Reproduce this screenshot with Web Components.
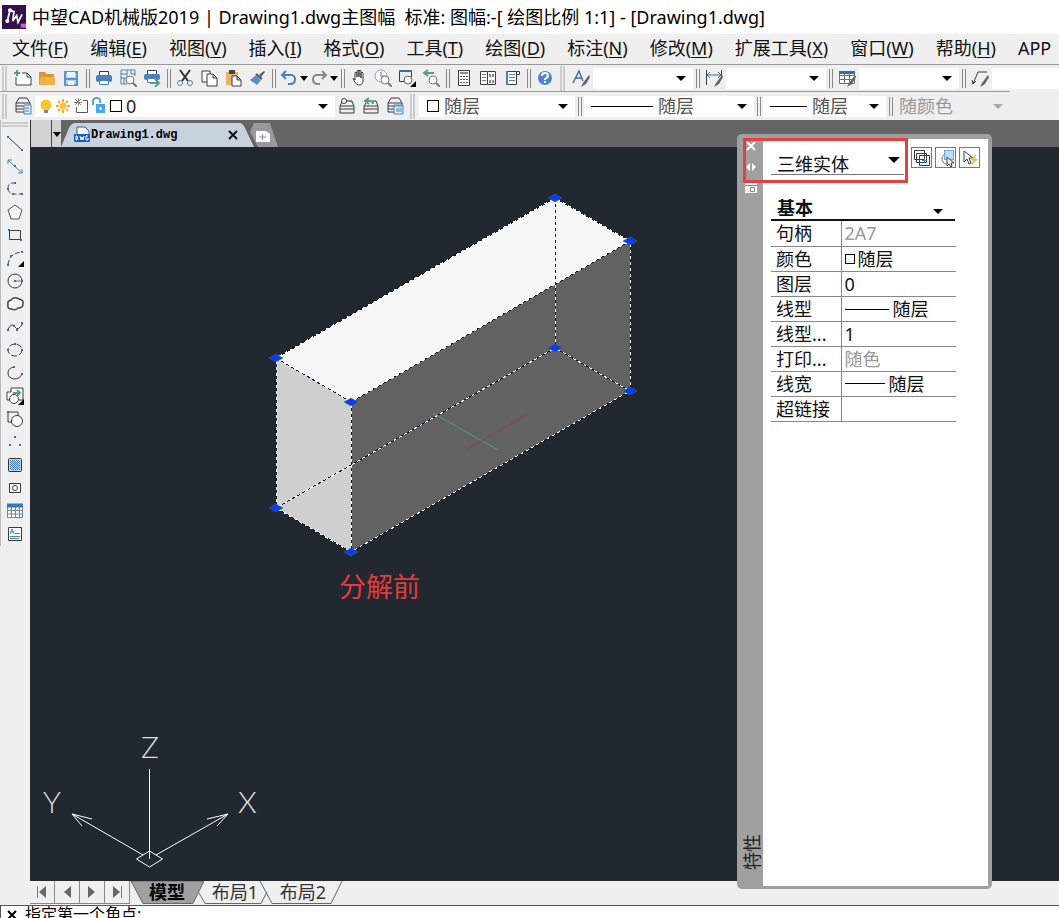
<!DOCTYPE html>
<html lang="zh-CN">
<head>
<meta charset="utf-8">
<title>中望CAD机械版2019</title>
<style>
html,body{margin:0;height:100%;overflow:hidden}
body{font:18px/24px "Noto Sans","Noto Sans CJK SC",sans-serif;color:#111;background:#efefef}
</style>
</head>
<body>
<cad-app>
  <cad-titlebar slot="title">中望CAD机械版2019 | Drawing1.dwg主图幅  标准: 图幅:-[ 绘图比例 1:1] - [Drawing1.dwg]</cad-titlebar>
  <cad-menubar slot="menu"></cad-menubar>
  <cad-toolbar slot="bars">
    <tool-button icon="new" label="新建"></tool-button><tool-button icon="open" label="打开"></tool-button><tool-button icon="save" label="保存"></tool-button>
    <bar-sep></bar-sep>
    <tool-button icon="print" label="打印"></tool-button><tool-button icon="preview" label="打印预览"></tool-button><tool-button icon="publish" label="发布"></tool-button>
    <bar-sep></bar-sep>
    <tool-button icon="cut" label="剪切"></tool-button><tool-button icon="copy" label="复制"></tool-button><tool-button icon="paste" label="粘贴"></tool-button><tool-button icon="brush" label="特性匹配"></tool-button>
    <bar-sep></bar-sep>
    <tool-button class="tight" icon="undo" label="放弃"></tool-button><tool-button class="arrow" icon="down" label="放弃列表"></tool-button><tool-button class="tight" icon="redo" label="重做"></tool-button><tool-button class="arrow" icon="down" label="重做列表"></tool-button>
    <bar-sep></bar-sep>
    <tool-button icon="hand" label="平移"></tool-button><tool-button icon="zoomrt" label="实时缩放"></tool-button><tool-button icon="zoomwin" label="窗口缩放"></tool-button><tool-button icon="zoomprev" label="上一个"></tool-button>
    <bar-sep></bar-sep>
    <tool-button icon="calc" label="计算器"></tool-button><tool-button icon="center" label="设计中心"></tool-button><tool-button icon="sheet" label="工具选项板"></tool-button>
    <bar-sep></bar-sep>
    <tool-button icon="help" label="帮助"></tool-button>
    <bar-sep class="light"></bar-sep>
    <tool-button icon="tstyle" label="文字样式"></tool-button><combo-box label="文字样式" style="--w:100px"></combo-box>
    <bar-sep></bar-sep>
    <tool-button icon="dstyle" label="标注样式"></tool-button><combo-box label="标注样式" style="--w:100px"></combo-box>
    <bar-sep></bar-sep>
    <tool-button icon="tabstyle" label="表格样式"></tool-button><combo-box label="表格样式" style="--w:100px"></combo-box>
    <bar-sep></bar-sep>
    <tool-button icon="mstyle" label="多重引线样式"></tool-button><combo-box label="多重引线样式" style="--w:100px"></combo-box>
  </cad-toolbar>
  <cad-toolbar slot="bars" class="short">
    <tool-button icon="layers" label="图层特性管理器"></tool-button>
    <combo-box label="图层" value="0" style="--w:300px;--fg:#222"><cad-icon name="layerstate" slot="lead" style="--iw:87px;--ih:18px"></cad-icon></combo-box>
    <tool-button icon="layercur" label="置为当前"></tool-button><tool-button icon="layerprev" label="上一个图层"></tool-button><tool-button icon="layerset" label="图层状态"></tool-button>
    <bar-sep class="light"></bar-sep>
    <combo-box label="颜色" value="随层" style="--w:156px"><cad-icon name="swatch" slot="lead" style="--iw:21px"></cad-icon></combo-box>
    <bar-sep></bar-sep>
    <combo-box label="线型" value="随层" style="--w:170px"><cad-icon name="longline" slot="lead" style="--iw:70px"></cad-icon></combo-box>
    <bar-sep></bar-sep>
    <combo-box label="线宽" value="随层" style="--w:123px"><cad-icon name="shortline" slot="lead" style="--iw:45px"></cad-icon></combo-box>
    <bar-sep></bar-sep>
    <combo-box label="打印样式" value="随颜色" disabled style="--w:115px"></combo-box>
  </cad-toolbar>
  <draw-toolbox slot="tools"></draw-toolbox>
  <doc-tabs slot="work"></doc-tabs>
  <drawing-view slot="work"></drawing-view>
  <layout-tabs slot="work"></layout-tabs>
  <property-panel slot="float"></property-panel>
  <command-line slot="command">指定第一个角点:</command-line>
</cad-app>
<script>
const K='stroke="#3c3c3c" fill="none"', B='stroke="#4a82b8" fill="none"', W='stroke="#3c3c3c" fill="#fff"';
const stack='<path d="M5 1h8l3 5H2zM2 6v3h14V6M2 9v3h14V9M2 12v3h14v-3" '+K+'/>';
const lens='<circle cx="11" cy="11" r="4" stroke="#777" fill="#fff"/><path d="M14 14l4 4" stroke="#777" stroke-width="2"/>';
const pen='<path d="M17 6l1 2-4 7-5 3 2-4z" fill="#666"/>';
const corner='<path d="M18 12v6h-6z" fill="#000"/>';
const dot=(x,y)=>`<rect x="${x-1}" y="${y-1}" width="2" height="2" fill="#3a6cab"/>`;
const ICONS={
new:'<path d="M8 4h5l4 4v8H2V8M13 4v4h4" '+W+'/><path d="M0 4h6M3 1v6" stroke="#54a082" stroke-width="2"/>',
open:'<path d="M1 3h6l2 2h7v11H1z" fill="#d8962c"/><path d="M3 8h14v8H1z" fill="#efb24a"/>',
save:'<path d="M3 3h12v13H3z" stroke="#5a94cf" fill="#b9d7f2" stroke-width="2"/><path d="M5 3h8v5H5z" fill="#e9f3fc"/><path d="M3 10h12" stroke="#5a94cf" stroke-width="2"/><path d="M6 12h6v4H6z" fill="#fff"/>',
print:'<path d="M4.500 6V2.500h9V6" '+W+'/><rect x="1" y="6" width="16" height="7" rx="2" fill="#4b80bf"/><path d="M4.500 11.500h9v4h-9z" stroke="#4b80bf" fill="#fff"/>',
preview:'<path d="M2 1h14v6M2 1v14h6M2 5h6v4H2M8 1v4M5 9v6M12 1v4h4" '+B+'/>'+lens,
publish:'<path d="M4.500 5V1.500h9V5" '+W+'/><rect x="1" y="5" width="16" height="6" rx="2" fill="#4b80bf"/><path d="M4.500 9.500h9v4h-9z" stroke="#4b80bf" fill="#fff"/><path d="M7 14h8M12 10l4 4-4 4" stroke="#54a082" stroke-width="2" fill="none"/>',
cut:'<path d="M4 1l8 11M14 1L6 12" stroke="#333" stroke-width="2"/><circle cx="4" cy="14" r="2.5" '+B+' /><circle cx="14" cy="14" r="2.5" '+B+'/>',
copy:'<path d="M2 2h8v11H2z" '+W+'/><path d="M7 5h6l4 4v8H7zM13 5v4h4" '+W+'/>',
paste:'<path d="M2 3h12v13H2z" fill="#e8b46c"/><path d="M5 1h6v4H5z" fill="#444"/><path d="M8 7h5l4 4v6H8zM13 7v4h4" '+W+'/>',
brush:'<path d="M16 2l1 1-4 5-2-2z" fill="#555"/><path d="M8 6l5 5-4 5-7-5z" fill="#5b8cc4"/><path d="M8 5l6 5" stroke="#555" stroke-width="2"/>',
undo:'<path d="M6 2L2 6l4 4M2 6h9a4 4 0 014 4c0 3-2 5-5 5H8" stroke="#4b80bf" stroke-width="2" fill="none"/>',
redo:'<path d="M12 2l4 4-4 4M16 6H7a4 4 0 00-4 4c0 3 2 5 5 5h2" stroke="#888" stroke-width="2" fill="none"/>',
down:'<path d="M5 7h8l-4 5z" fill="#000"/>',
hand:'<path d="M5 11V4q1-2 2 0v4-6q1-2 2 0v6-6q1-2 2 0v7-5q1-2 2 0v7q0 5-4 5H8q-2 0-5-6 0-2 2 1" '+W+'/>',
zoomrt:'<circle cx="7" cy="7" r="6" stroke="#7ba4cd" fill="#fff"/><path d="M7 3v4h4" '+B+'/>'+lens,
zoomwin:'<path d="M1.500 12.500v-10h12v6M1.500 12.500H6" '+K+'/><path d="M1 2h13" stroke="#3a6cab" stroke-width="2"/><circle cx="10" cy="11" r="4" stroke="#666" fill="#fff"/>'+corner,
zoomprev:'<path d="M6 1L2 4l4 3M2 4h10" stroke="#54a082" stroke-width="2" fill="none"/>'+lens,
calc:'<path d="M3.500 1.500h11v15h-11z" '+W+'/><path d="M5 4h8" stroke="#888" stroke-width="2"/><path d="M5 7.500h8M5 10.500h8M5 13.500h8" stroke="#555" stroke-dasharray="2 1"/>',
center:'<path d="M1.500 2.500h7v13h-7zM8.500 2.500h8v13h-8" '+W+'/><path d="M3 5.500h4M3 8.500h4M3 11.500h4" stroke="#4b80bf"/><path d="M10 5h2v3h-2zM13 5h2v3h-2zM10 11h2v3h-2zM13 11h2v3h-2z" fill="#888"/>',
sheet:'<path d="M3.500 2.500h10v13h-10zM13.500 2.500h3v3h-3" '+W+'/><path d="M4 2v14" stroke="#4b80bf" stroke-width="2"/><path d="M6 5.500h6M6 8.500h6M6 11.500h6" '+B+'/>',
help:'<circle cx="9" cy="9" r="7" fill="#4b86c9"/><path d="M6 7q0-3 3-3t3 3q0 1-3 3v1M9 12v2" stroke="#fff" stroke-width="2" fill="none"/>',
tstyle:'<path d="M1 14L7 2l4 10M4 9h6" stroke="#3a6cab" fill="none" stroke-width="1.5"/>'+pen,
dstyle:'<path d="M1.500 1v15M16.500 1v6" '+K+'/><path d="M2 6h14M5 3L2 6l3 3M13 3l3 3-3 3" stroke="#3a6cab" fill="none"/>'+pen,
tabstyle:'<path d="M1.500 2.500h15v12h-15zM1 6.500h15M1 10.500h15M6.500 2v13M11.500 2v13" stroke="#5d7389" fill="#fff"/><path d="M1 3.500h16" stroke="#3a6cab" stroke-width="3"/>'+pen,
mstyle:'<path d="M1 11l1 4 3-3M2 15L7 3h9" '+K+'/>'+pen,
layers:stack+'<path d="M10 8h7v9h-7z" stroke="#4a82b8" fill="#dcecfa"/><path d="M11 11h4M11 14h4" '+B+'/>',
layerset:stack+'<path d="M8 8h9v9H8z" stroke="#4a82b8" fill="#dcecfa"/><path d="M8 9h9M10 12h6M10 14h6" '+B+'/>',
layercur:'<path d="M8 4h6l2 5H2l2-4M2 9v3h14V9M2 12v4h14v-4" '+K+'/><circle cx="6" cy="4" r="2.5" '+W+'/><path d="M9 4h4l3 5" '+B+'/>',
layerprev:'<path d="M10 4h4l2 5H2l2-3M2 9v3h14V9M2 12v4h14v-4" '+K+'/><path d="M7 1L3 4l4 3M3 4h5q3 0 3 3" stroke="#54a082" stroke-width="2" fill="none"/>',
layerstate:['0 0 87 18','<circle cx="11" cy="8" r="5.5" fill="#f9c62f"/><path d="M9 13h4v3H9z" fill="#888"/><circle cx="28" cy="9" r="3.500" fill="#f8c33e"/><path d="M28 2v3M28 13v3M21 9h3M32 9h3M23 4l2 2M31 12l2 2M33 4l-2 2M23 14l2-2" stroke="#edae38" stroke-width="2"/><path d="M48 3.500h4.500v12h-11V10" stroke="#555" fill="#fff"/><path d="M43.500 1v8M39 5.500h8M40 2l6 6M46 2l-6 6" stroke="#888"/><path d="M58 8V4q0-3 4-3t3 5" stroke="#4ba6e2" stroke-width="2" fill="none"/><rect x="61" y="7" width="9" height="9" fill="#49a8ea"/><path d="M65.500 10v3" stroke="#fff" stroke-width="2"/><rect x="75.5" y="3.5" width="11" height="11" fill="#fff" stroke="#000"/>'],
swatch:['0 0 21 18','<rect x="8.5" y="3.5" width="11" height="11" fill="#fff" stroke="#000"/>'],
longline:['0 0 70 18','<path d="M7 9.500h62" stroke="#000"/>'],
shortline:['0 0 45 18','<path d="M7 9.500h37" stroke="#000"/>'],
smallswatch:['0 0 12 18','<rect x=".5" y="4.500" width="9" height="9" fill="#fff" stroke="#000"/>'],
line44:['0 0 44 18','<path d="M0 9.500h44" stroke="#000"/>'],
line40:['0 0 40 18','<path d="M0 8.500h40" stroke="#000"/>'],
tline:'<path d="M2 3l14 13" '+K+'/>'+dot(2,3)+dot(16,16),
txline:'<path d="M2 3l14 13M2 7V3h4M12 16h4v-4" '+B+'/>'+dot(9,9),
tpline:'<path d="M9 3H7q-5 0-5 5t5 6h10" stroke="#4c586b" fill="none" stroke-dasharray="4 2"/>'+dot(9,3)+dot(2,9)+dot(7,14)+dot(16,14),
tpoly:'<path d="M9 2l7 5-3 9H5L2 7z" stroke="#555" fill="#f4f4f4"/>',
trect:'<path d="M3.500 4.500h11v9h-11z" '+K+'/>'+dot(3,4)+dot(15,14),
tarc:'<path d="M2 16Q3 4 16 3" stroke="#3c3c3c" fill="none" stroke-dasharray="5 2"/>'+dot(2,16)+dot(5,7)+dot(16,3)+corner,
tcircle:'<circle cx="9" cy="9" r="7" '+K+'/><path d="M9 9h8" '+B+'/>'+dot(9,9)+dot(16,9),
tcloud:'<path d="M5 5q3-4 8-1 5 1 4 5 0 4-5 4-3 3-6 1-5 0-4-4-1-4 3-5z" stroke="#444" stroke-width="1.5" fill="#f4f4f4"/>',
tspline:'<path d="M2 11q4-7 7-2t8-4" '+K+'/>'+dot(2,12)+dot(8,8)+dot(11,12)+dot(16,5),
tellipse:'<ellipse cx="9" cy="9" rx="7" ry="6" stroke="#3c3c3c" fill="none" stroke-dasharray="6 2"/>'+dot(2,9)+dot(16,9)+dot(9,3),
tearc:'<path d="M8 3q-6 1-6 6t6 6q6 0 8-5" '+K+'/>'+dot(8,3)+dot(16,10),
tinsert:'<path d="M5 1h12v12h-4M5 1v4M5 5H1v8h4" '+W+'/><circle cx="8" cy="12" r="4.5" '+W+'/><path d="M7 6h7M11 3l3 3-3 3" stroke="#54a082" stroke-width="2" fill="none"/>'+corner,
tblock:'<path d="M2 12V2h10v5M2 12h4" '+K+'/><circle cx="11" cy="11" r="5.5" '+W+'/>'+dot(2,2),
tpoint:dot(9,4)+dot(4,12)+dot(14,12),
thatch:'<rect x="2.5" y="2.5" width="13" height="13" rx="1" fill="#b8d2ee" stroke="#333"/><path d="M4 4.500h10M4 6.500h10M4 8.500h10M4 10.500h10M4 12.500h10" stroke="#4a82b8" stroke-dasharray="1 1"/><path d="M5 5.500h9M5 7.500h9M5 9.500h9M5 11.500h9M5 13.500h9" stroke="#4a82b8" stroke-dasharray="1 1"/>',
tregion:'<path d="M3.5 4.5h11v9h-11z" '+W+'/><circle cx="9" cy="9" r="2.5" '+K+'/>',
ttable:'<path d="M1.5 2.5h15v13h-15zM1 8.500h15M1 12h15M5.500 2v14M9.500 2v14M13.500 2v14" stroke="#6d87a5" fill="#fff"/><path d="M1 3.500h16" stroke="#3a78b5" stroke-width="4"/>',
ttext:'<path d="M2.5 2.500h13v13h-13z" '+W+'/><path d="M4 9l2-5 2 5M5 7h3M9 8.500h5M4 11.500h10M4 13.500h9" '+B+'/>',
app:'<rect width="18" height="18" fill="#34104d"/><path d="M6 4L4 12M6 4l3 1-1 7 3-4 1 5 3-6" stroke="#fff" stroke-width="1.300" fill="none"/><circle cx="6" cy="4" r="1.500" fill="#fff"/><circle cx="4" cy="12" r="1.500" fill="#fff"/><rect x="14" y="14" width="4" height="3" fill="#d558d8"/>',
close:'<path d="M5 5l8 8M13 5l-8 8" stroke="currentColor" stroke-width="2"/>',
split:'<path d="M8 5v8L4 9zM10 5v8l4-4z" fill="#fff"/>',
options:'<path d="M3 4h12v10H3z" fill="#fff"/><path d="M3 6.500h12M8.500 8.500h4v4h-4z" stroke="#888" fill="none"/>',
psel:'<path d="M1.500 1.500h10v9h-10zM3.500 4.500h10v9h-10zM6.500 6.500h10v10h-10z" '+W+'/><path d="M9 11.500h5M11.500 9v5" '+B+'/>',
pobj:'<rect x="7.500" y="1.500" width="9" height="9" fill="#b9dcf8" stroke="#6ea8d8"/><path d="M7 6a5 5 0 106 8" '+B+'/><path d="M10 8v9l2-2 2 3 1-1-1-3h3z" '+W+'/>',
pquick:'<path d="M3 2v11l3-3 2 5 2-1-2-5h4z" '+W+'/><path d="M15 5l-6 6h3l-2 6 7-7h-3z" fill="#efbd68"/>',
dwg:'<path d="M4 1h8l4 4v8H4z" fill="#fff" stroke="#285a9e"/><rect x="1" y="8" width="16" height="8" rx="1" fill="#1d5db9"/><path d="M3 10v4h1q1-2 0-4zM7 10l1 4 1-3 1 3 1-4M15 10h-2v4h2v-2" stroke="#fff" fill="none"/>',
plus:'<path d="M2 4h10l4 3v8H2z" fill="#fff"/><path d="M5 10h7M8.500 7v6" stroke="#6ba0c2"/>',
first:'<path d="M4.500 3v12" stroke="#777"/><path d="M13 3v12L6 9z" fill="#666"/>',
prev:'<path d="M13 3v12L6 9z" fill="#666"/>',
next:'<path d="M5 3v12l7-6z" fill="#666"/>',
last:'<path d="M5 3v12l7-6z" fill="#666"/><path d="M13.500 3v12" stroke="#777"/>'
};
const icon=n=>{const i=ICONS[n],[v,s]=Array.isArray(i)?i:['0 0 18 18',i];return `<svg viewBox="${v}" aria-hidden="true">${s}</svg>`};
const define=(name,html)=>customElements.define(name,class extends HTMLElement{
  constructor(){super();this.attachShadow({mode:'open'})}
  connectedCallback(){this.shadowRoot.innerHTML=typeof html==='function'?html(this):html}
});
const RESET='*{box-sizing:border-box}button,input,select{font:inherit;color:inherit;background:none;border:0;border-radius:0;padding:0;margin:0;outline:0;appearance:none}';

define('cad-icon',h=>`<style>:host{display:block;flex:none;width:var(--iw,18px);height:var(--ih,18px)}svg{display:block;width:100%;height:100%}</style>${icon(h.getAttribute('name'))}`);

define('tool-button',h=>`<style>${RESET}:host{display:block;flex:none;width:24px;height:23px}:host(.tight){width:22px}:host(.arrow){width:8px}
button{display:flex;width:100%;height:100%;align-items:center;justify-content:center}</style>
<button aria-label="${h.getAttribute('label')}"><cad-icon name="${h.getAttribute('icon')}"></cad-icon></button>`);

define('bar-sep',`<style>:host{display:flex;flex:none;justify-content:flex-end;width:9px;height:19px;box-sizing:border-box;padding-right:2px}
:host(.light){width:12px;height:25px;padding-right:4px}i{width:4px;box-sizing:border-box;border:solid #8a8a8a;border-width:0 1px}:host(.light) i{border-color:#ccc;border-width:0 2px;width:5px}</style><i></i>`);

define('combo-box',h=>`<style>${RESET}:host{display:block;flex:none;width:var(--w)}
div{display:flex;align-items:center;height:21px;background:#fff;position:relative}
div.off{background:none;color:#999}
select{flex:1;min-width:0;height:21px;line-height:20px;padding-left:4px;color:var(--fg,#555);opacity:1}
.off select{color:#999}
svg{position:absolute;right:7px;top:8px;width:10px;height:5px;pointer-events:none;fill:#000}.off svg{fill:#aaa}</style>
<div class="${h.hasAttribute('disabled')?'off':''}"><slot name="lead"></slot><select aria-label="${h.getAttribute('label')}" ${h.hasAttribute('disabled')?'disabled':''}><option>${h.getAttribute('value')||''}</option></select><svg viewBox="0 0 10 5"><path d="M0 0h10L5 5z"/></svg></div>`);

define('cad-titlebar',`<style>:host{display:flex;align-items:center;gap:6px;height:34px;padding:0 2px;background:#fff;white-space:pre;color:#000;overflow:hidden}h1{font:inherit;margin:0}</style>
<cad-icon name="app" style="--iw:24px;--ih:24px"></cad-icon><h1><slot></slot></h1>`);

define('cad-menubar',()=>`<style>${RESET}:host{display:block;border-bottom:1px solid #999}
nav{display:flex;gap:22px;height:30px;padding:0 0 2px 12px;overflow:hidden}button{flex:none;white-space:nowrap}u{font-style:normal;text-underline-offset:2px;text-decoration-thickness:1px}</style>
<nav>${['文件F','编辑E','视图V','插入I','格式O','工具T','绘图D','标注N','修改M','扩展工具X','窗口W','帮助H'].map(t=>`<button>${t.slice(0,-1)}(<u>${t.slice(-1)}</u>)</button>`).join('')}<button>APP</button></nav>`);

define('cad-toolbar',`<style>:host{display:block;overflow:hidden}:host(.short){width:fit-content;border-top:1px solid #999}
div{display:flex;align-items:center;height:26px}:host(.short) div{height:28px}
i{flex:none;width:5px;height:25px;margin:0 4px 0 2px;box-sizing:border-box;border:solid #ccc;border-width:0 2px}</style><div><i></i><slot></slot></div>`);

define('draw-toolbox',()=>`<style>:host{display:block;width:30px}
div{width:28px;border-left:1px solid #bbb;padding-bottom:1px;display:flex;flex-direction:column;align-items:center}
i{width:26px;height:5px;margin:2px 0 4px;box-sizing:border-box;border:solid #ccc;border-width:2px 0}</style>
<div><i></i>${[['line','直线'],['xline','构造线'],['pline','多段线'],['poly','正多边形'],['rect','矩形'],['arc','圆弧'],['circle','圆'],['cloud','修订云线'],['spline','样条曲线'],['ellipse','椭圆'],['earc','椭圆弧'],['insert','插入块'],['block','创建块'],['point','点'],['hatch','图案填充'],['region','面域'],['table','表格'],['text','多行文字']].map(([n,l])=>`<tool-button icon="t${n}" label="${l}"></tool-button>`).join('')}</div>`);

define('doc-tabs',`<style>${RESET}:host{display:flex;height:27px;background:#656565}
.blank{width:21px;background:#d2d2d2;border-left:1px solid #333}
.list{width:10px;background:#d2d2d2;border-left:1px solid #444;display:flex;align-items:center;justify-content:center}
.tab{position:relative;width:193px;display:flex;align-items:center;padding:3px 12px 0 12px}
.tab>svg{position:absolute;inset:0;width:100%;height:100%}
.tab button{position:relative}.name{flex:1;display:flex;align-items:center;text-align:left;font:bold 12px/20px "Liberation Mono",monospace;color:#000}
.add{width:28px;margin-left:-4px;padding:5px 6px 0 4px;background:#999;clip-path:polygon(0 12px,4px 3px,20px 3px,28px 27px,8px 27px)}</style>
<div class="blank"></div><button class="list" aria-label="图纸列表"><cad-icon name="down"></cad-icon></button>
<div class="tab"><svg viewBox="0 0 193 27" preserveAspectRatio="none"><path d="M0 27L8 8q2-5 7-5h163q4 0 6 5l9 19z" fill="#c8d2dd"/></svg><button class="name"><cad-icon name="dwg"></cad-icon>Drawing1.dwg</button><button aria-label="关闭"><cad-icon name="close"></cad-icon></button></div>
<button class="add" aria-label="新图纸"><cad-icon name="plus"></cad-icon></button>`);

const verts=[[555,198],[630,241],[276,358],[351,402],[555,348],[630,391],[276,508],[351,552]];
const edges=[[0,1],[0,2],[1,3],[2,3],[0,4],[1,5],[2,6],[3,7],[4,5],[4,6],[5,7],[6,7]];
define('drawing-view',()=>`<style>:host{display:block;flex:1;min-height:0;background:#212830;overflow:hidden}svg{display:block;width:100%;height:100%}
.note{font:27px "Noto Sans CJK SC",sans-serif;fill:#e23b3f}.axis{font:300 30px Lato,sans-serif;fill:#ddd}</style>
<svg role="img" aria-label="三维实体"><g transform="translate(-30 -147)">
<path d="M555 198L630 241 351 402 276 358z" fill="#f6f6f6"/><path d="M276 358l75 44v150l-75-44z" fill="#cfcfcf"/><path d="M351 402L630 241v150L351 552z" fill="#626262"/>
<g shape-rendering="crispEdges">${edges.map(([a,b])=>{const d=`M${verts[a]}L${verts[b]}`;return `<path d="${d}" stroke="#fff"/><path d="${d}" stroke="#111820" stroke-dasharray="3 3"/>`}).join('')}</g>
<path d="M433 413L498 450" stroke="#47a85a"/><path d="M466 450L528 414" stroke="#a03c42"/>
${verts.map(([x,y])=>`<path d="M${x-7} ${y}l7-4 7 4-7 4z" fill="#0a3cf5" stroke="#2f6fa0" stroke-width=".5"/>`).join('')}
<text class="note" x="339" y="597">分解前</text>
<g stroke="#fff" fill="none"><path d="M149.500 769v90M143 855L72 814M156 855L228 814M92 819l-20-5 10 12M207 819l21-5-11 12M149.500 851l13 8-13 8-13-8z"/></g>
<g class="axis"><text x="141" y="758">Z</text><text x="43" y="813">Y</text><text x="238" y="813">X</text></g>
</g></svg>`);

define('layout-tabs',`<style>${RESET}:host{display:flex;height:24px;background:#efefef}
.nav{width:25px;height:23px;border:solid #888;border-width:0 1px 1px 0;display:flex;align-items:center;justify-content:center}
.tab{position:relative;height:24px;width:74px;margin-right:-6px;line-height:20px;padding-bottom:3px;color:#333}
.tab svg{position:absolute;inset:0;width:100%;height:100%}.tab span{position:relative}
.on{z-index:1;font-weight:bold;color:#000}</style>
<button class="nav" aria-label="第一个"><cad-icon name="first"></cad-icon></button><button class="nav" aria-label="上一个"><cad-icon name="prev"></cad-icon></button><button class="nav" aria-label="下一个"><cad-icon name="next"></cad-icon></button><button class="nav" aria-label="最后一个"><cad-icon name="last"></cad-icon></button>
<button class="tab on"><svg viewBox="0 0 74 24" preserveAspectRatio="none"><path d="M1 0l12 22.500h50L74 0z" fill="#a0a0a0" stroke="#666"/></svg><span>模型</span></button>
<button class="tab"><svg viewBox="0 0 74 24" preserveAspectRatio="none"><path d="M1 12l6 10.500h56L69 11" fill="none" stroke="#666"/></svg><span>布局1</span></button>
<button class="tab"><svg viewBox="0 0 74 24" preserveAspectRatio="none" overflow="visible"><path d="M-6 0l12 22.500h59L76 0" fill="none" stroke="#666"/></svg><span>布局2</span></button>`);

define('command-line',`<style>${RESET}:host{display:flex;height:13px;box-sizing:border-box;background:#fff;border-top:1px solid #555;border-left:1px solid #555;overflow:hidden;font-size:16px;line-height:16px;color:#000}
button{height:18px;width:22px;padding-left:2px;margin-right:2px}output{white-space:nowrap}</style><button aria-label="关闭"><cad-icon name="close"></cad-icon></button><output><slot></slot></output>`);

const rows=[['句柄','2A7','off'],['颜色','随层','','smallswatch',12],['图层','0'],['线型','随层','','line44',44],['线型...','1'],['打印...','随色','off'],['线宽','随层','','line40',40],['超链接','']];
define('property-panel',()=>`<style>${RESET}:host{display:flex;box-sizing:border-box;width:255px;background:#a0a0a0;border-radius:5px;padding:5px 4px 3px 0;color:#111}
.strip{width:26px;display:flex;flex-direction:column;align-items:center;justify-content:space-between;color:#fff;margin-top:-2px;padding:0 0 16px 2px}
.strip button{display:flex;align-items:flex-start;height:21px}.strip h2{font:18px/22px "Noto Sans CJK SC",sans-serif;margin:0;color:#222;width:36px;height:36px;display:flex;align-items:center;justify-content:center;transform:rotate(-90deg)}
.body{flex:1;min-width:0;background:#fff;padding:8px 8px 0}
.head{display:flex;gap:3px}.type{position:relative;flex:none;width:133px;height:28px;border-bottom:1px solid #777;margin-right:4px}
.type select{width:100%;height:34px;padding-left:6px}
.arr{position:absolute;right:4px;top:10px;width:12px;height:6px;pointer-events:none}
.head button{flex:none;width:21px;height:21px;border:1px solid #777;display:flex;align-items:center;justify-content:center}
.group{width:184px;display:flex;align-items:center;justify-content:space-between;height:27px;margin-top:19px;padding:2px 12px 0 6px;border-bottom:2px solid #111;font-weight:bold}
.group svg{width:10px;height:5px;margin-top:8px}
table{border-collapse:collapse;table-layout:fixed;width:185px}th{width:70px;font-weight:normal;text-align:left;padding:0 0 0 5px;border-right:1px solid #888;white-space:nowrap}
th,td{height:25px;border-bottom:1px solid #888}td{padding:0 0 0 3px}td div{display:flex;align-items:center;gap:4px;height:24px}td div.sw{gap:1px}
input,table select{width:100%;min-width:0;flex:1;height:24px;line-height:24px}.off{color:#999;opacity:1}
.mark{position:absolute;left:6px;top:4px;width:165px;height:45px;border:3px solid #e63e42;pointer-events:none}</style>
<div class="strip"><div><button aria-label="关闭"><cad-icon name="close"></cad-icon></button><button aria-label="自动隐藏"><cad-icon name="split"></cad-icon></button><button aria-label="选项"><cad-icon name="options"></cad-icon></button></div><h2>特性</h2></div>
<div class="body"><div class="head"><div class="type"><select aria-label="对象类型"><option>三维实体</option></select><svg class="arr" viewBox="0 0 12 6"><path d="M0 0h12L6 6z"/></svg></div>
<button aria-label="切换"><cad-icon name="psel"></cad-icon></button><button aria-label="选择对象"><cad-icon name="pobj"></cad-icon></button><button aria-label="快速选择"><cad-icon name="pquick"></cad-icon></button></div>
<button class="group">基本<svg viewBox="0 0 10 5"><path d="M0 0h10L5 5z"/></svg></button>
<table>${rows.map(([l,v,c='',i,w],n)=>`<tr><th scope="row"><label for="p${n}">${l}</label></th><td><div class="${i==='smallswatch'?'sw':''}">${i?`<cad-icon name="${i}" style="--iw:${w}px"></cad-icon><select id="p${n}"><option>${v}</option></select>`:`<input id="p${n}" class="${c}" value="${v}" ${c?'readonly':''}>`}</div></td></tr>`).join('')}</table></div>
<div class="mark"></div>`);

define('cad-app',`<style>:host{display:flex;flex-direction:column;height:100vh;overflow:hidden}
main{flex:1;min-height:0;display:flex;position:relative}.work{flex:1;min-width:0;display:flex;flex-direction:column}
::slotted(property-panel){position:absolute;right:67px;top:14px;bottom:16px}</style>
<slot name="title"></slot><slot name="menu"></slot><slot name="bars"></slot><main><slot name="tools"></slot><div class="work"><slot name="work"></slot></div><slot name="float"></slot></main><slot name="command"></slot>`);
</script>
</body>
</html>
